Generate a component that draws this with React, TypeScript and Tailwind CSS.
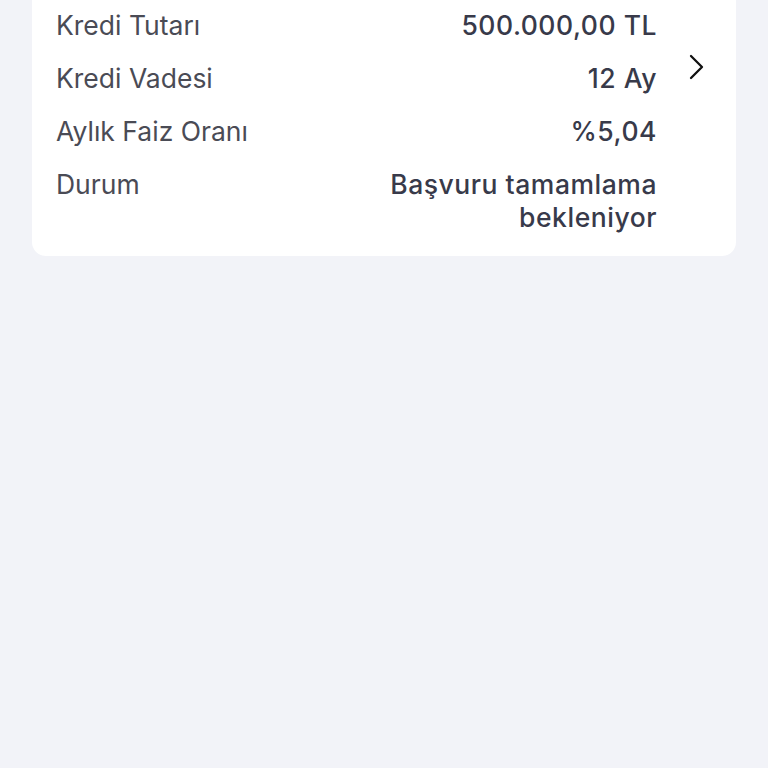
import React from 'react';

interface Row {
  label: string;
  value: string;
}

const rows: Row[] = [
  { label: 'Kredi Tutarı', value: '500.000,00 TL' },
  { label: 'Kredi Vadesi', value: '12 Ay' },
  { label: 'Aylık Faiz Oranı', value: '%5,04' },
  { label: 'Durum', value: 'Başvuru tamamlama bekleniyor' },
];

const App = () => {
  return (
    <div
      className="min-h-[768px] bg-[#f2f3f8] px-8"
      style={{ fontFamily: 'Inter, "Noto Sans", sans-serif' }}
    >
      <div className="flex rounded-b-[14px] bg-white pt-[9px] pb-[22px] pl-6 pr-[30px]">
        <div className="flex flex-1 flex-col gap-5">
          {rows.map((row) => (
            <div className="flex justify-between text-[26.5px] leading-[33px]" key={row.label}>
              <span className="text-[#4a4b55]">{row.label}</span>
              <span className="max-w-[290px] text-right font-medium tracking-[0.02em] text-[#383a4a]">
                {row.value}
              </span>
            </div>
          ))}
        </div>
        <div className="ml-[31px] mt-[45px] self-start">
          <svg width="18" height="26" viewBox="0 0 18 26" fill="none">
            <path d="M3 2 L14 13 L3 24" stroke="#111" strokeWidth="2.3" strokeLinecap="round" strokeLinejoin="round" />
          </svg>
        </div>
      </div>
    </div>
  );
};

export default App;
